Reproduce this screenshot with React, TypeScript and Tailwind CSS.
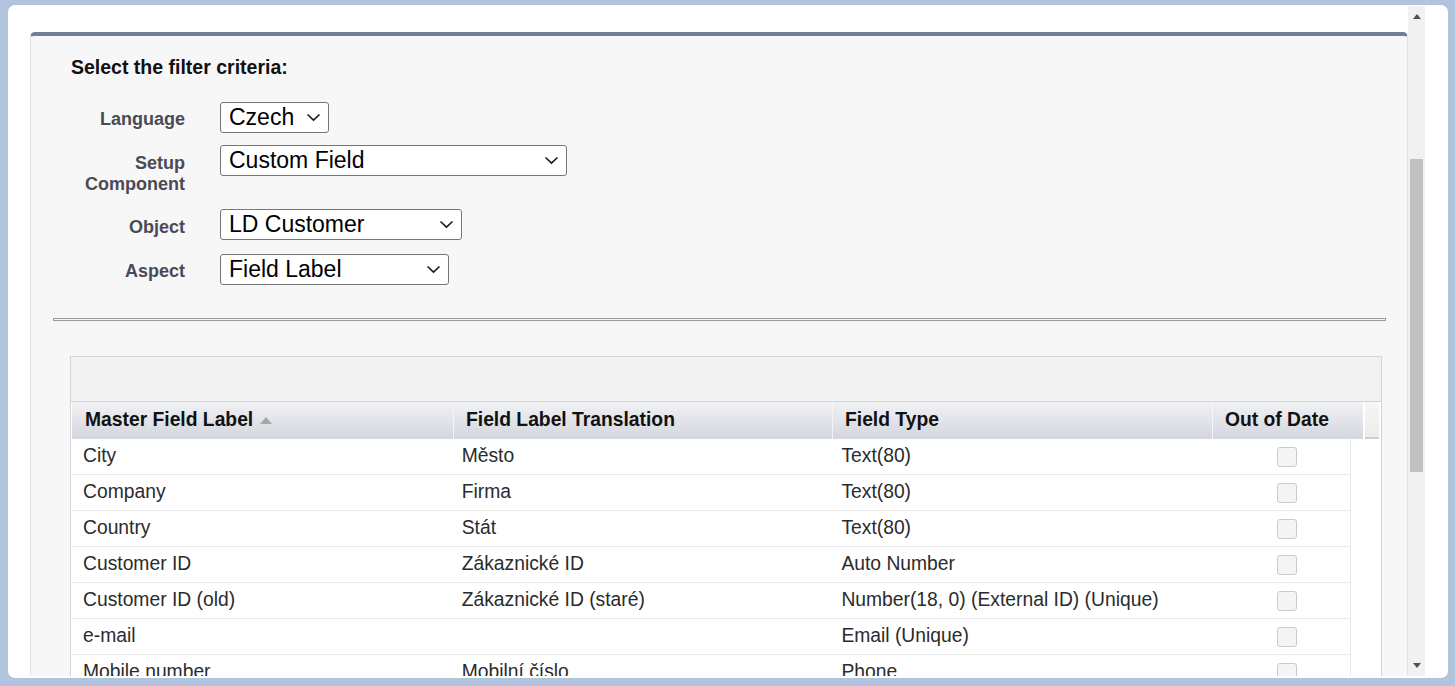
import React from "react";

interface Row {
  label: string;
  translation: string;
  type: string;
}

const rows: Row[] = [
  { label: "City", translation: "Město", type: "Text(80)" },
  { label: "Company", translation: "Firma", type: "Text(80)" },
  { label: "Country", translation: "Stát", type: "Text(80)" },
  { label: "Customer ID", translation: "Zákaznické ID", type: "Auto Number" },
  {
    label: "Customer ID (old)",
    translation: "Zákaznické ID (staré)",
    type: "Number(18, 0) (External ID) (Unique)",
  },
  { label: "e-mail", translation: "", type: "Email (Unique)" },
  { label: "Mobile number", translation: "Mobilní číslo", type: "Phone" },
];

function Chevron() {
  return (
    <svg width="15" height="9" viewBox="0 0 15 9" className="shrink-0">
      <path d="M1.5 1.5 L7.5 7.2 L13.5 1.5" fill="none" stroke="#1a1a1a" strokeWidth="1.6" />
    </svg>
  );
}

function FakeSelect({ value, width }: { value: string; width: string }) {
  return (
    <div
      className={`${width} h-[31px] bg-white border border-[#767676] rounded-[3px] flex items-center justify-between pl-[8px] pr-[7px]`}
    >
      <span className="text-[23px] leading-[26px] text-black -mt-[2px]">{value}</span>
      <Chevron />
    </div>
  );
}

function FilterRow({
  label,
  children,
  className = "",
  labelPad = "pt-[7px]",
}: {
  label: React.ReactNode;
  children: React.ReactNode;
  className?: string;
  labelPad?: string;
}) {
  return (
    <div className={`flex items-start ${className}`}>
      <div
        className={`w-[114px] text-right ${labelPad} text-[18px] leading-[21px] font-bold text-[#4a4a56]`}
      >
        {label}
      </div>
      <div className="ml-[35px]">{children}</div>
    </div>
  );
}

export default function App() {
  return (
    <div
      className="w-[1455px] h-[686px] bg-[#b0c4de] overflow-hidden pt-[5px] pl-[8px]"
      style={{ fontFamily: '"Liberation Sans", Arial, sans-serif' }}
    >
      <div className="w-[1440px] h-[673px] bg-white rounded-[7px] flex">
        {/* scrolling content */}
        <div className="w-[1400px] h-[670px] mt-[1px] overflow-hidden pt-[26px] pl-[22px]">
          <div className="w-[1378px] h-[700px] bg-[#f7f7f7] border-t-4 border-t-[#747e97] border-x border-x-[#e2e2e2] rounded-t-[5px]">
            <div className="pl-[40px] pt-[20px] text-[19.5px] leading-[23px] font-bold text-[#111]">
              Select the filter criteria:
            </div>

            <div className="pl-[40px] mt-[23px]">
              <FilterRow label="Language" labelPad="pt-[7px]">
                <FakeSelect value="Czech" width="w-[109px]" />
              </FilterRow>
              <FilterRow
                className="mt-[12px]"
                labelPad="pt-[8px]"
                label={
                  <>
                    Setup
                    <br />
                    Component
                  </>
                }
              >
                <FakeSelect value="Custom Field" width="w-[347px]" />
              </FilterRow>
              <FilterRow className="mt-[14px]" labelPad="pt-[8px]" label="Object">
                <FakeSelect value="LD Customer" width="w-[242px]" />
              </FilterRow>
              <FilterRow className="mt-[14px]" labelPad="pt-[7px]" label="Aspect">
                <FakeSelect value="Field Label" width="w-[229px]" />
              </FilterRow>
            </div>

            <div className="ml-[22px] mt-[33px] w-[1333px] h-[3px] border border-[#9a9a9a]" />

            {/* translations table */}
            <div className="ml-[39px] mt-[35px] w-[1312px] border border-[#d4d4d4] bg-white">
              <div className="h-[45px] bg-[#f2f2f2] border-b border-[#d4d4d4]" />
              <div className="pl-[1px]">
                <div className="flex h-[37px]">
                  <div className="w-[381px] flex items-center pl-[13px] bg-linear-to-b from-[#f1f2f5] to-[#d3d6de] text-[19.3px] font-bold text-[#111]">
                    Master Field Label
                    <svg width="12" height="7" viewBox="0 0 12 7" className="ml-[7px]">
                      <path d="M0 7 L6 0 L12 7 Z" fill="#a6a6a6" />
                    </svg>
                  </div>
                  <div className="w-[379px] flex items-center pl-[12px] border-l border-l-[#f4f5f7] bg-linear-to-b from-[#f1f2f5] to-[#d3d6de] text-[19.3px] font-bold text-[#111]">
                    Field Label Translation
                  </div>
                  <div className="w-[380px] flex items-center pl-[12px] border-l border-l-[#f4f5f7] bg-linear-to-b from-[#f1f2f5] to-[#d3d6de] text-[19.3px] font-bold text-[#111]">
                    Field Type
                  </div>
                  <div className="w-[151px] flex items-center pl-[12px] border-l border-l-[#f4f5f7] bg-linear-to-b from-[#f1f2f5] to-[#d3d6de] text-[19.3px] font-bold text-[#111]">
                    Out of Date
                  </div>
                  <div className="w-[14px] ml-[2px] bg-linear-to-b from-[#f6f6f6] to-[#ececec] border-b-2 border-b-[#cfcfcf]" />
                </div>

                <div className="w-[1279px] border-r border-[#e8e8e8]">
                  {rows.map((r) => (
                    <div
                      key={r.label}
                      className="flex h-[36px] items-center border-b border-[#e9e9e9] text-[19.3px] text-[#2b2b2b]"
                    >
                      <div className="w-[381px] pl-[11px] whitespace-nowrap">{r.label}</div>
                      <div className="w-[379px] pl-[9px] whitespace-nowrap">{r.translation}</div>
                      <div className="w-[380px] pl-[10px] whitespace-nowrap">{r.type}</div>
                      <div className="w-[139px] pl-[66px]">
                        <div className="w-[20px] h-[20px] rounded-[3px] border-[1.5px] border-[#cacaca] bg-[#f4f4f4]" />
                      </div>
                    </div>
                  ))}
                </div>
              </div>
            </div>
          </div>
        </div>

        {/* scrollbar */}
        <div className="w-[17px] h-[670px] mt-[1px] bg-[#f1f1f1] flex flex-col items-center">
          <svg width="8" height="5" viewBox="0 0 8 5" className="mt-[8px]">
            <path d="M0 5 L4 0 L8 5 Z" fill="#505050" />
          </svg>
          <div className="w-[13px] h-[313px] bg-[#c1c1c1] mt-[140px]" />
          <svg width="8" height="5" viewBox="0 0 8 5" className="mt-auto mb-[8px]">
            <path d="M0 0 L8 0 L4 5 Z" fill="#505050" />
          </svg>
        </div>
      </div>
    </div>
  );
}
